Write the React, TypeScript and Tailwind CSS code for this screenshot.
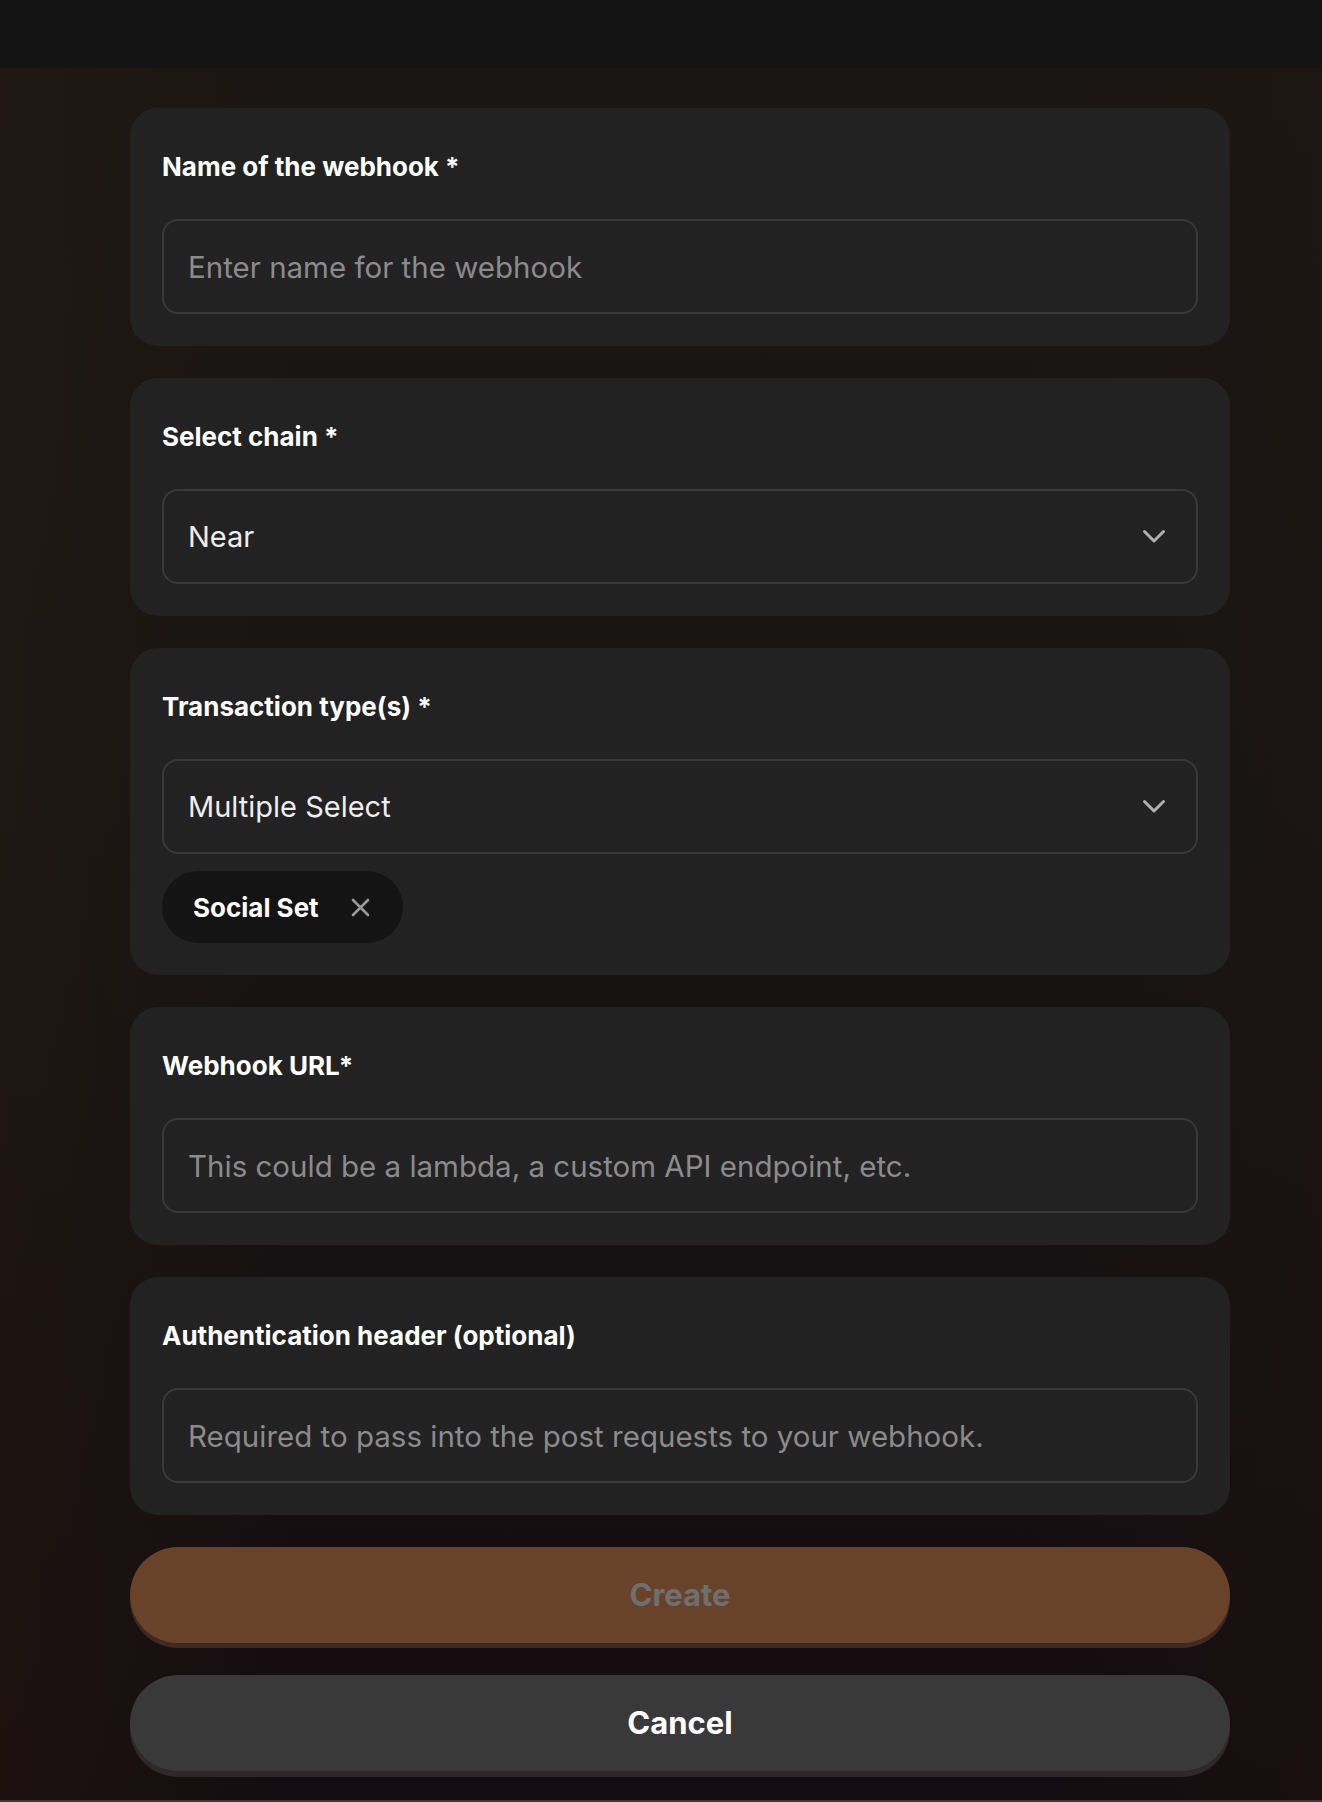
import { useState } from "react";

const FONT = { fontFamily: "Inter, 'Noto Sans', sans-serif" };

function Chevron() {
  return (
    <svg width="24" height="15" viewBox="0 0 24 15" fill="none" className="shrink-0">
      <path d="M2.5 2.5l9.5 9.5 9.5-9.5" stroke="#b0b0b0" strokeWidth="3" strokeLinecap="round" strokeLinejoin="round" />
    </svg>
  );
}

function Card({ label, children }: { label: string; children: React.ReactNode }) {
  return (
    <div className="rounded-[28px] bg-[#222222] px-8 pb-8 pt-[41px]">
      <div className="mb-[34px] text-[26px] font-bold leading-[36px] text-white">{label}</div>
      {children}
    </div>
  );
}

function TextField({ placeholder }: { placeholder: string }) {
  return (
    <input
      type="text"
      placeholder={placeholder}
      className="block h-[95px] w-full rounded-[16px] border-2 border-[#393939] bg-[#222222] px-[24px] text-[29.5px] text-white outline-none placeholder:text-[#8b8b8b]"
      style={FONT}
    />
  );
}

function SelectField({ value }: { value: string }) {
  return (
    <button
      type="button"
      className="flex h-[95px] w-full items-center justify-between rounded-[16px] border-2 border-[#393939] bg-[#222222] pl-[24px] pr-[30px] text-left text-[29px] text-[#ededed]"
    >
      <span>{value}</span>
      <Chevron />
    </button>
  );
}

export default function App() {
  const [tags, setTags] = useState(["Social Set"]);

  return (
    <div
      className="flex min-h-[1802px] flex-col border-b-2 border-[#3b3b3b] bg-[linear-gradient(90deg,rgba(45,28,16,0.35)_0%,rgba(0,0,0,0)_22%,rgba(0,0,0,0)_78%,rgba(40,24,16,0.22)_100%),linear-gradient(180deg,#1a1613_0%,#171514_45%,#140c10_100%)]"
      style={FONT}
    >
      <div className="h-[68px] shrink-0 bg-[#141414]" />

      <div className="ml-[130px] flex w-[1100px] flex-col gap-[32px] pt-[40px]">
        <Card label="Name of the webhook *">
          <TextField placeholder="Enter name for the webhook" />
        </Card>

        <Card label="Select chain *">
          <SelectField value="Near" />
        </Card>

        <Card label="Transaction type(s) *">
          <SelectField value="Multiple Select" />
          <div className="mt-[17px] flex flex-wrap gap-3">
            {tags.map((t) => (
              <div
                key={t}
                className="flex h-[72px] items-center gap-[32px] rounded-full bg-[#141414] pl-[31px] pr-[33px] text-[26px] font-bold text-white"
              >
                <span>{t}</span>
                <button
                  type="button"
                  aria-label={`Remove ${t}`}
                  onClick={() => setTags(tags.filter((x) => x !== t))}
                >
                  <svg width="19" height="19" viewBox="0 0 19 19" fill="none">
                    <path d="M2 2l15 15M17 2L2 17" stroke="#9a9a9a" strokeWidth="2.6" strokeLinecap="round" />
                  </svg>
                </button>
              </div>
            ))}
          </div>
        </Card>

        <Card label="Webhook URL*">
          <TextField placeholder="This could be a lambda, a custom API endpoint, etc." />
        </Card>

        <Card label="Authentication header (optional)">
          <TextField placeholder="Required to pass into the post requests to your webhook." />
        </Card>

        <div className="flex flex-col gap-[32px]">
          <button
            type="button"
            disabled
            className="h-[96px] w-full rounded-full bg-[#68432a] text-[31px] font-bold text-[#6f6f6f] shadow-[0_5px_0_#3e2a22]"
          >
            Create
          </button>
          <button
            type="button"
            className="h-[96px] w-full rounded-full bg-[#393939] text-[31px] font-bold text-white shadow-[0_6px_0_#2d2829]"
          >
            Cancel
          </button>
        </div>
      </div>
    </div>
  );
}
